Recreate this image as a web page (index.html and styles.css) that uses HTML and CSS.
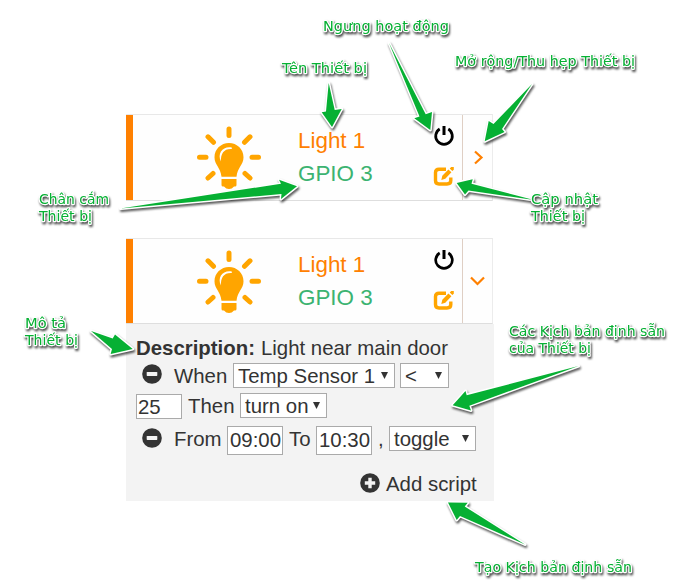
FILE: index.html
```html
<!DOCTYPE html>
<html lang="vi">
<head>
<meta charset="utf-8">
<title>Light 1</title>
<link rel="stylesheet" href="styles.css">
</head>
<body>
<svg class="defs" aria-hidden="true">
  <symbol id="bulb" viewBox="0 0 66 66">
    <g stroke="#ffa500" stroke-width="5" stroke-linecap="round" fill="none">
      <path d="M33 4v6.5M3.5 32.2h6.5M56 32.2h6.5M12 11.8l5.5 5.500M54 11.800l-5.500 5.500M12 53l5-4.500M54 53l-5-4.500"/>
    </g>
    <path fill="#ffa500" d="M33 18C25 18 18.500 24.200 18.500 32.200C18.500 40 24.500 42 25.500 51.800H40.500C41.500 42 47.500 40 47.500 32.200C47.500 24.200 41 18 33 18Z"/>
    <path fill="#ffa500" d="M25.500 54h15v6q0 1.500-1.500 1.500h-1q-2 2.500-5 2.500t-5-2.500h-1q-1.500 0-1.500-1.500z"/>
    <path fill="#fff" d="M25 36.500C20.800 28.500 27 21 35.500 22.500C36.700 22.900 36 24 35 23.900C28 23.700 24.500 28.500 25 36.500Z"/>
  </symbol>
  <symbol id="power" viewBox="0 0 22 22">
    <path fill="none" stroke="#000" stroke-width="2.700" d="M6.700 4A8.300 8.300 0 1 0 15.300 4"/>
    <path stroke="#000" stroke-width="3" d="M11 1v9"/>
  </symbol>
  <symbol id="edit" viewBox="0 0 22 22">
    <path fill="none" stroke="#ffa500" stroke-width="3.400" d="M13 3.200H6Q2.500 3.200 2.500 6.500V14.500Q2.500 18 6 18H14Q17.800 18 17.800 14.500V11.500"/>
    <path fill="#ffa500" d="M8.300 14L9.300 9.700L15.400 3.400L18.400 6.300L12.300 12.800ZM16.700 2.400L18.200 1H20.800V3.700L19.300 5.100Z"/>
  </symbol>
  <symbol id="minus" viewBox="0 0 20 20">
    <circle cx="10" cy="10" r="9.800" fill="#333"/><rect x="4.700" y="7.900" width="10.600" height="4" rx=".6" fill="#f3f3f3"/>
  </symbol>
  <symbol id="plus" viewBox="0 0 20 20">
    <circle cx="10" cy="10" r="9.800" fill="#333"/><path stroke="#f3f3f3" stroke-width="3.400" d="M4.800 10h10.400M10 4.800v10.400"/>
  </symbol>
</svg>

<main class="devices">
  <section class="device">
    <div class="head">
      <svg class="bulb"><use href="#bulb"/></svg>
      <div class="names"><div class="name">Light 1</div><div class="pin">GPIO 3</div></div>
      <div class="actions"><svg><use href="#power"/></svg><svg><use href="#edit"/></svg></div>
      <div class="expand"><svg viewBox="0 0 16 16"><path d="M5 1.500l6.500 6L5 13.500"/></svg></div>
    </div>
  </section>

  <section class="device open">
    <div class="head">
      <svg class="bulb"><use href="#bulb"/></svg>
      <div class="names"><div class="name">Light 1</div><div class="pin">GPIO 3</div></div>
      <div class="actions"><svg><use href="#power"/></svg><svg><use href="#edit"/></svg></div>
      <div class="expand"><svg viewBox="0 0 16 16"><path d="M1 4.500L7.500 11l6.500-6.500"/></svg></div>
    </div>
    <div class="body">
      <div class="row desc"><b>Description:</b><span>Light near main door</span></div>
      <div class="row when">
        <svg class="dot"><use href="#minus"/></svg><span class="word">When</span>
        <span class="select sensor">Temp Sensor 1<i></i></span>
        <span class="select compare">&lt;<i></i></span>
      </div>
      <div class="row then">
        <span class="input value">25</span><span class="word">Then</span>
        <span class="select turn">turn on<i></i></span>
      </div>
      <div class="row from">
        <svg class="dot"><use href="#minus"/></svg><span class="word">From</span>
        <span class="input time">09:00</span><span class="word to">To</span>
        <span class="input time">10:30</span><span class="word comma">,</span>
        <span class="select toggle">toggle<i></i></span>
      </div>
      <div class="row add"><svg class="dot"><use href="#plus"/></svg><span>Add script</span></div>
    </div>
  </section>
</main>

<svg class="notes" viewBox="0 0 682 585">
  <g class="arrows">
    <path d="M328.700 83L334.700 110L341.700 109L332 127L321.700 112.300L326 111.500Z"/>
    <path d="M389 43L425.700 114.300L432 112L430.300 130L414.300 118.300L419.500 116.500Z"/>
    <path d="M532 84L502 129L504.500 132L484.700 141.300L488.700 121L493.500 124Z"/>
    <path d="M534 200L471.500 183.700L472.700 179.300L456.700 183L465 194.500L468.500 190.500Z"/>
    <path d="M120.500 208.500L281 183.700L279 179.700L297 186.300L281 199L281.500 194Z"/>
    <path d="M91 331L112.700 338.500L115 334.500L132.700 349L110.700 354L112 349Z"/>
    <path d="M578.500 366L466.700 395.300L465.500 391L452.700 405.300L471 410.500L469.300 405.700Z"/>
    <path d="M525 544.500L464.700 506.500L467.700 502.700L448 502.500L456.700 520L460 516Z"/>
  </g>
  <g class="labels">
    <text x="323" y="31" textLength="126" lengthAdjust="spacingAndGlyphs">Ngưng hoạt động</text>
    <text x="282" y="73" textLength="85" lengthAdjust="spacingAndGlyphs">Tên Thiết bị</text>
    <text x="455" y="66" textLength="180" lengthAdjust="spacingAndGlyphs">Mở rộng/Thu hẹp Thiết bị</text>
    <text x="39" y="204" textLength="70" lengthAdjust="spacingAndGlyphs">Chân cắm</text>
    <text x="39" y="221" textLength="53" lengthAdjust="spacingAndGlyphs">Thiết bị</text>
    <text x="531" y="204" textLength="67" lengthAdjust="spacingAndGlyphs">Cập nhật</text>
    <text x="531" y="221" textLength="54" lengthAdjust="spacingAndGlyphs">Thiết bị</text>
    <text x="25" y="328" textLength="41" lengthAdjust="spacingAndGlyphs">Mô tả</text>
    <text x="25" y="345" textLength="53" lengthAdjust="spacingAndGlyphs">Thiết bị</text>
    <text x="509" y="336" textLength="156" lengthAdjust="spacingAndGlyphs">Các Kịch bản định sẵn</text>
    <text x="509" y="353" textLength="82" lengthAdjust="spacingAndGlyphs">của Thiết bị</text>
    <text x="475" y="572" textLength="157" lengthAdjust="spacingAndGlyphs">Tạo Kịch bản định sẵn</text>
  </g>
</svg>
</body>
</html>
```
FILE: styles.css
```css
* { box-sizing: border-box; }
body {
  margin: 0;
  width: 682px;
  height: 585px;
  overflow: hidden;
  position: relative;
  background: #fff;
  color: #333;
  font-family: "Liberation Sans", Arial, sans-serif;
}
.defs { display: none; }
.devices {
  display: flex;
  flex-direction: column;
  gap: 37px;
  width: 368px;
  margin-left: 126px;
  padding-top: 114px;
}
.head {
  display: flex;
  height: 87px;
  width: 367px;
  background: #fefefe;
  border-top: 1px solid #e8e8e8;
  border-bottom: 1px solid #dedede;
  border-right: 1px solid #ececec;
  box-shadow: inset 7px 0 #ff8000;
  padding-left: 7px;
}
.open .head { height: 86px; }
.bulb { width: 66px; height: 66px; margin: 10px 0 0 63px; }
.names { width: 120px; margin: 9px 0 0 36px; font-size: 22.4px; line-height: 33px; }
.name { color: #ff8000; }
.pin { color: #3cb371; }
.actions {
  display: flex;
  flex-direction: column;
  gap: 19px;
  width: 45px;
  padding: 10px 0 0 15px;
  border-right: 1px solid #dfcfc4;
}
.actions svg { width: 22px; height: 22px; flex: none; }
.expand { display: flex; align-items: center; justify-content: center; width: 29px; }
.expand svg { width: 16px; height: 16px; fill: none; stroke: #ff8000; stroke-width: 2.2; }
.body {
  height: 177px;
  padding: 12px 0 0 10px;
  background: #f3f3f3;
  font-size: 20.4px;
  line-height: 24px;
  white-space: nowrap;
}
.row { display: flex; align-items: flex-start; }
.desc { height: 27px; }
.desc span { margin-left: 6px; }
.when { height: 30px; }
.then { height: 33px; }
.from { height: 46px; }
.dot { width: 20px; height: 20px; margin: 1px 12px 0 6px; flex: none; }
.from .dot { margin-top: 2px; }
.select, .input {
  display: block;
  flex: none;
  height: 25px;
  line-height: 24px;
  border: 1px solid #aaa;
  background: #fff;
}
.select { display: flex; justify-content: space-between; padding: 0 6px 0 4px; }
.select i {
  width: 7px;
  height: 7px;
  margin-top: 8px;
  background: #333;
  clip-path: polygon(0 0, 100% 0, 50% 100%);
}
.when .word { width: 59px; padding-top: 1px; }
.sensor { width: 162px; }
.compare { width: 49px; margin-left: 5px; }
.value { width: 46px; padding-left: 1px; margin-top: 1px; }
.then .word { width: 58px; padding: 1px 0 0 6px; }
.turn { width: 87px; }
.from .word { width: 53px; padding-top: 1px; }
.time { width: 56px; height: 29px; line-height: 27px; padding-left: 2px; }
.from .to { width: 33px; padding-left: 6px; }
.from .comma { width: 17px; padding-left: 6px; }
.toggle { width: 87px; }
.add { margin-left: 218px; }
.add .dot { margin-right: 6px; }
.notes { position: absolute; left: 0; top: 0; width: 682px; height: 585px; }
.arrows { filter: drop-shadow(1.500px 2px 1px rgba(0, 0, 0, .65)); }
.arrows path { fill: #06b033; stroke: #fff; stroke-width: 3px; paint-order: stroke; stroke-linejoin: round; }
.labels { filter: drop-shadow(1.500px 2px .8px rgba(0, 0, 0, .7)); }
.labels text {
  font: 14px "DejaVu Sans", "Noto Sans", sans-serif;
  fill: #06b033;
  stroke: #fff;
  stroke-width: 2.500px;
  stroke-linejoin: round;
  paint-order: stroke;
}
```
